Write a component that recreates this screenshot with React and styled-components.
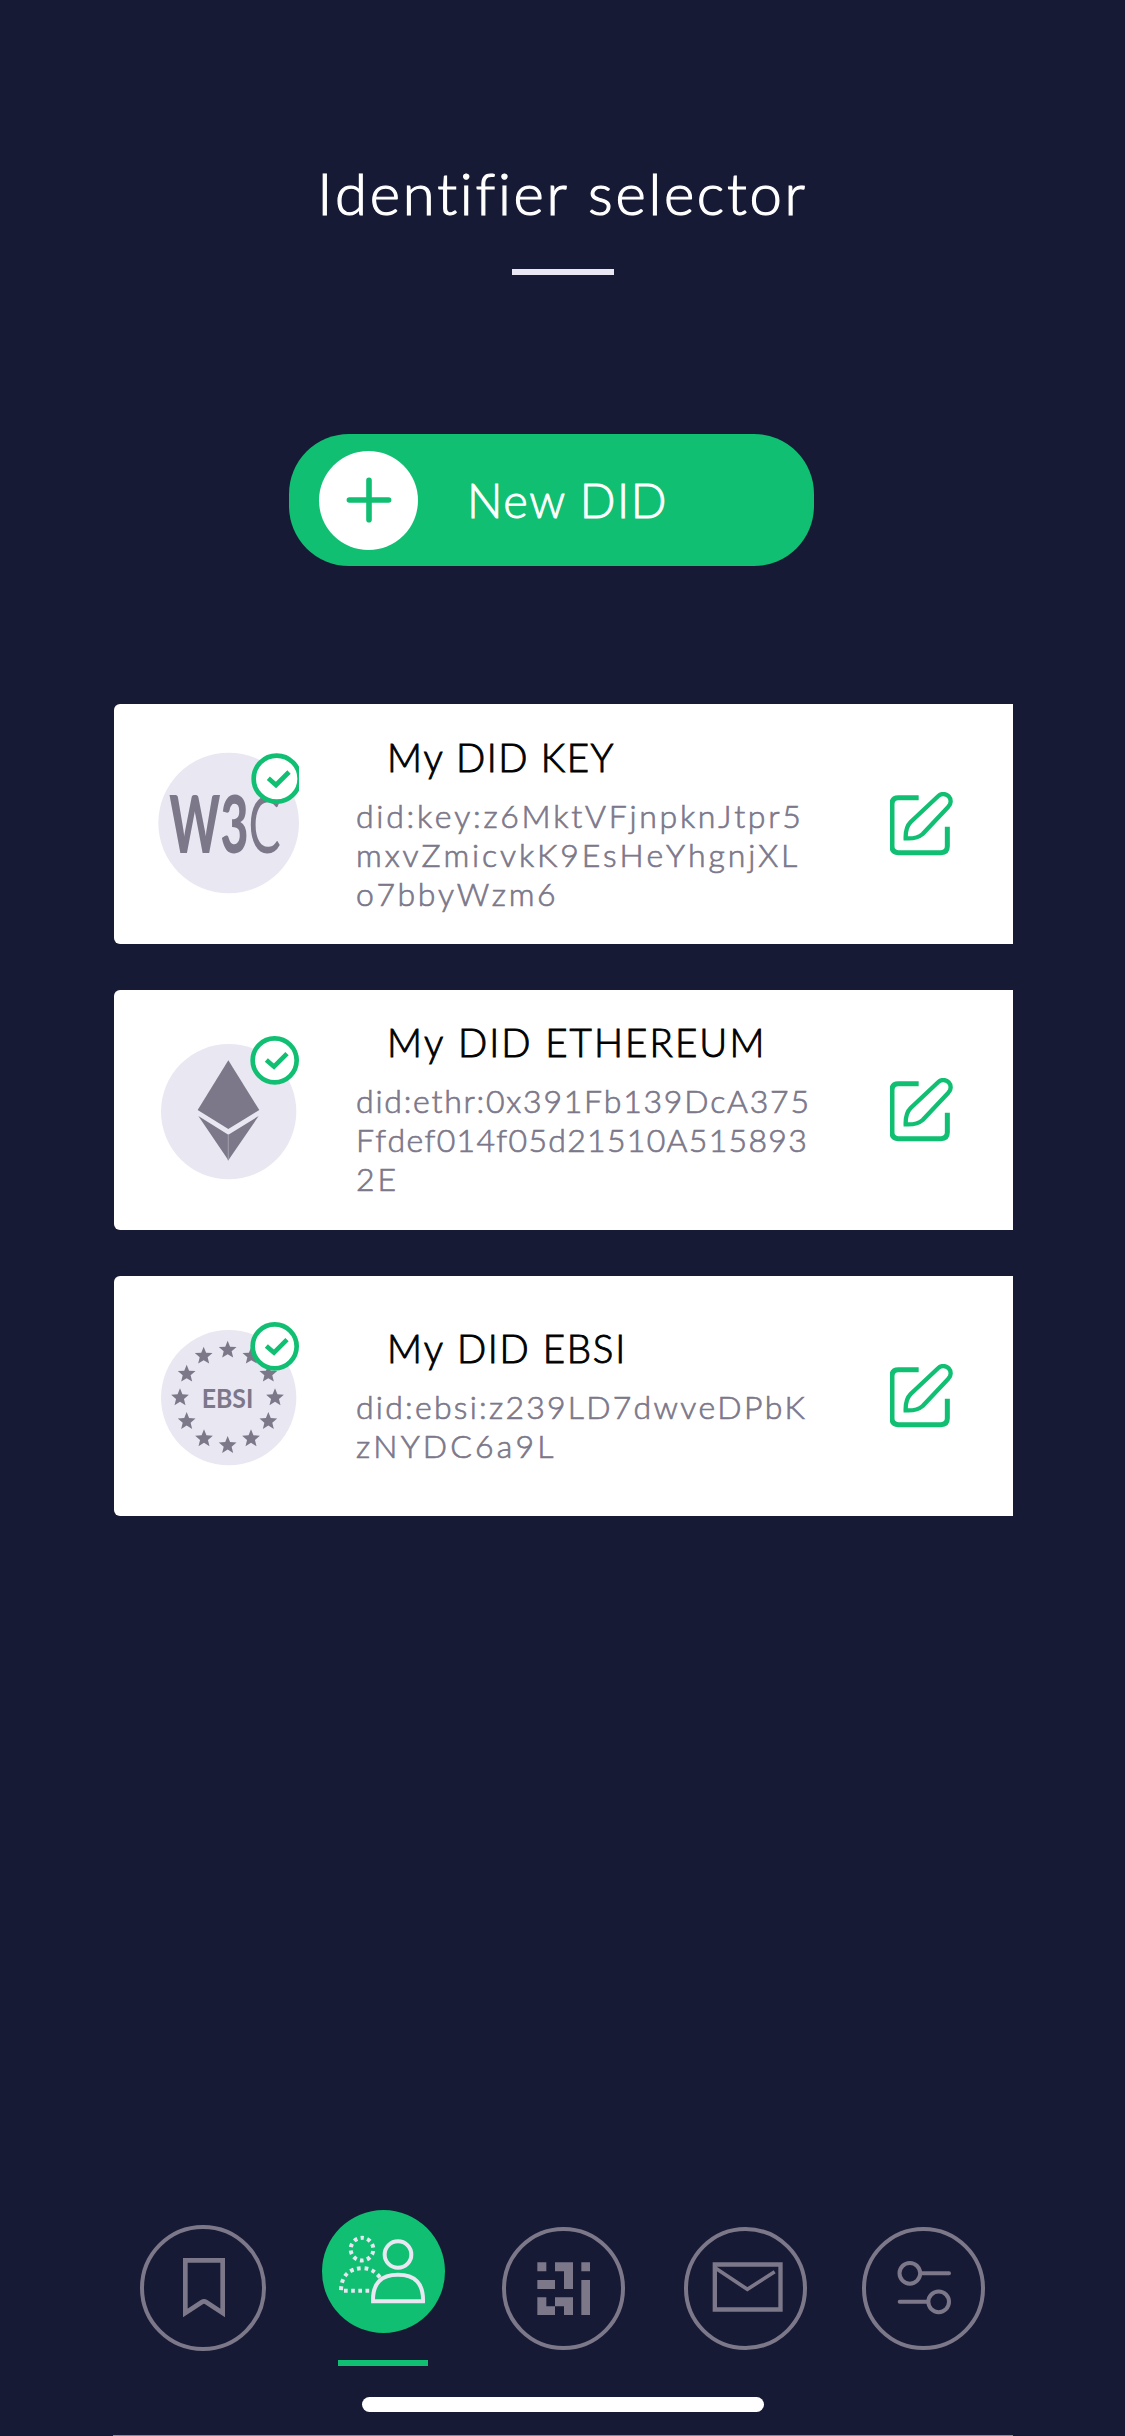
import React from "react";
import styled, { createGlobalStyle } from "styled-components";

const NAVY = "#171a34";
const GREEN = "#10bf72";
const GRAY = "#7c788a";
const LAVENDER = "#e9e8f2";

const GlobalStyle = createGlobalStyle`
  * { box-sizing: border-box; }
  body {
    margin: 0;
    background: ${NAVY};
    font-family: Lato, "Open Sans", sans-serif;
    font-weight: 300;
    font-kerning: none;
    font-variant-ligatures: none;
    -webkit-text-stroke-width: 0.7px;
  }
  svg { display: block; }
`;

const Screen = styled.div`
  width: 1125px;
  height: 2436px;
  display: flex;
  flex-direction: column;
  align-items: center;
  overflow: hidden;
  background: ${NAVY};
`;

const Header = styled.header`
  padding-top: 158px;
  display: flex;
  flex-direction: column;
  align-items: center;
  gap: 41px;
`;

const Title = styled.h1`
  margin: 0;
  color: #fff;
  font-size: 58px;
  font-weight: 300;
  line-height: 70px;
  letter-spacing: 2.7px;
  white-space: nowrap;
  -webkit-text-stroke-width: 1.2px;
`;

const TitleRule = styled.div`
  width: 102px;
  height: 6px;
  margin-left: 2px;
  background: ${LAVENDER};
`;

const NewButton = styled.button`
  width: 525px;
  height: 132px;
  margin: 159px 0 0 -22px;
  padding: 0 0 0 30px;
  display: flex;
  align-items: center;
  gap: 49px;
  border: 0;
  border-radius: 60px;
  background: ${GREEN};
  color: #fff;
  font: 300 47px/56px Lato, "Open Sans", sans-serif;
  letter-spacing: 1.5px;
  -webkit-text-stroke-width: 0.9px;
`;

const PlusDisc = styled.span`
  width: 99px;
  height: 99px;
  display: grid;
  place-items: center;
  border-radius: 50%;
  background: #fff;
`;

const CardList = styled.main`
  flex: 1;
  width: 899px;
  margin: 138px 0 0 2px;
  display: flex;
  flex-direction: column;
  gap: 46px;
`;

const Card = styled.article`
  height: 240px;
  padding: 0 59px 0 44px;
  display: grid;
  grid-template-columns: 141px 1fr 64px;
  align-items: center;
  border-radius: 6px 0 0 6px;
  background: #fff;
`;

const CardText = styled.div`
  padding-left: 57px;
  margin-top: ${(p) => -2 * p.$lift}px;
  display: flex;
  flex-direction: column;
  gap: 16px;
`;

const CardName = styled.h2`
  margin: 0;
  padding-left: 31px;
  color: #000;
  font-size: 38.5px;
  font-weight: 300;
  line-height: 46px;
  letter-spacing: ${(p) => p.$spacing}px;
  white-space: nowrap;
  -webkit-text-stroke-width: 0.9px;
`;

const DidValue = styled.div`
  display: flex;
  flex-direction: column;
`;

const DidLine = styled.span`
  color: ${GRAY};
  font-size: 32px;
  line-height: 39px;
  letter-spacing: ${(p) => p.$spacing}px;
  white-space: nowrap;
`;

const Nav = styled.nav`
  width: 845px;
  height: 141px;
  display: grid;
  grid-template-columns: 182px 180px 182px 178px 123px;
  align-items: start;
`;

const NavItem = styled.div`
  margin-top: ${(p) => p.$top}px;
  display: flex;
  flex-direction: column;
  align-items: flex-start;
  gap: 27px;
`;

const ActiveRule = styled.div`
  width: 90px;
  height: 6px;
  margin-left: 16px;
  background: ${GREEN};
`;

const HomeIndicator = styled.div`
  width: 402px;
  height: 15px;
  margin: 31px 0 23px;
  border-radius: 8px;
  background: #fff;
`;

const BottomRule = styled.div`
  width: 900px;
  height: 1px;
  background: #8b8b93;
`;

const LogoText = styled.text`
  fill: ${GRAY};
  stroke: none;
  font-family: Lato, "Open Sans", sans-serif;
  font-weight: ${(p) => p.$weight};
  font-size: ${(p) => p.$size}px;
`;

const LightSpan = styled.tspan`
  font-weight: 400;
`;

function PlusIcon() {
  return (
    <svg width="46" height="46" viewBox="0 0 46 46" fill="none" stroke={GREEN} strokeWidth="5.6" strokeLinecap="round">
      <path d="M23 3.4V42.8M3.4 23H42.6" />
    </svg>
  );
}

function CheckBadge({ cx, cy, r }) {
  return (
    <g fill="none" stroke={GREEN} strokeWidth="14">
      <circle cx={cx} cy={cy} r={r} fill="#fff" />
      <path d={`M${cx - 25} ${cy - 1}L${cx - 2} ${cy + 19}L${cx + 37} ${cy - 20}`} />
    </g>
  );
}

function W3cAvatar() {
  return (
    <svg width="141" height="148" viewBox="174 180 423 444">
      <circle cx="386" cy="399" r="211" fill={LAVENDER} />
      <LogoText x="208" y="488" $size={238} $weight={900} textLength="334" lengthAdjust="spacingAndGlyphs">
        W3<LightSpan>C</LightSpan>
      </LogoText>
      <CheckBadge cx={530} cy={266} r={69} />
    </svg>
  );
}

function EthereumAvatar() {
  return (
    <svg width="141" height="148" viewBox="174 168 423 444">
      <circle cx="386" cy="395" r="203" fill={LAVENDER} />
      <path d="M385 241L478 390L385 447L293 390Z" fill={GRAY} />
      <path d="M295 408L385 464L476 408L385 541Z" fill={GRAY} />
      <path d="M385 464V541" stroke="#9895a5" strokeWidth="4" />
      <CheckBadge cx={524} cy={241} r={66} />
    </svg>
  );
}

const STAR_CENTERS = [
  [383, 255], [454, 273], [505, 327], [525, 398], [505, 469], [453, 521],
  [383, 541], [312, 521], [260, 469], [240, 398], [260, 327], [311, 273],
];

function starPoints(cx, cy) {
  return Array.from({ length: 10 }, (_, i) => {
    const radius = i % 2 ? 12.5 : 28;
    const angle = (Math.PI / 5) * i - Math.PI / 2;
    return `${(cx + radius * Math.cos(angle)).toFixed(1)},${(cy + radius * Math.sin(angle)).toFixed(1)}`;
  }).join(" ");
}

function EbsiAvatar() {
  return (
    <svg width="141" height="148" viewBox="174 171 423 444">
      <circle cx="386" cy="398" r="203" fill={LAVENDER} />
      {STAR_CENTERS.map(([x, y]) => (
        <polygon key={`${x}-${y}`} points={starPoints(x, y)} fill={GRAY} />
      ))}
      <LogoText x="305" y="428" $size={81} $weight={700} textLength="155" lengthAdjust="spacingAndGlyphs">EBSI</LogoText>
      <CheckBadge cx={524} cy={244} r={66} />
    </svg>
  );
}

function EditIcon() {
  return (
    <svg width="64" height="64" viewBox="990 306 192 192" fill="none" stroke={GREEN} strokeWidth="15">
      <path d="M1076 323H1015Q996 323 996 342V469Q996 488 1015 488H1143Q1162 488 1162 469V410" />
      <path d="M1135 318L1052 396Q1036 412 1037 445Q1071 447 1088 432L1165 350A21.5 21.5 0 0 0 1135 318Z" strokeWidth="13" />
    </svg>
  );
}

function BookmarkIcon() {
  return (
    <svg width="126" height="126" viewBox="120 105 378 378" fill="none" stroke={GRAY} strokeWidth="14">
      <circle cx="309" cy="294" r="183" strokeWidth="12" />
      <path d="M256 211H368V369L318 336Q312 332 306 336L256 369Z" />
    </svg>
  );
}

function IdentitiesIcon() {
  return (
    <svg width="123" height="123" viewBox="666 59.5 369 369" fill="none" stroke={LAVENDER} strokeWidth="12">
      <circle cx="850.5" cy="244" r="184.5" fill={GREEN} stroke="none" />
      <circle cx="894" cy="193" r="40" />
      <path d="M819 333Q817 254 894 254Q971 254 969 333Z" />
      <circle cx="786" cy="177" r="34" strokeDasharray="11 10.36" strokeDashoffset="5.5" transform="rotate(-90 786 177)" />
      <path d="M723 300Q725 234 791 234Q820 236 840 262" strokeDasharray="11 11" />
      <path d="M732 302H818" strokeDasharray="11 10.5" />
    </svg>
  );
}

function ScanIcon() {
  return (
    <svg width="123" height="123" viewBox="96 111 369 369">
      <circle cx="280.5" cy="295.5" r="178.5" fill="none" stroke={GRAY} strokeWidth="12" />
      <path
        fill={GRAY}
        d="M202 217h27v27h-27zM255 217h54v80h-27v-53h-27zM334 217h26v27h-26zM202 270h53v27h-53zM334 270h26v105h-26zM202 322h27v27h26v26h-53zM255 322h54v53h-27v-26h-27z"
      />
    </svg>
  );
}

function MailIcon() {
  return (
    <svg width="123" height="123" viewBox="642 111 369 369" fill="none" stroke={GRAY} strokeWidth="13">
      <circle cx="826.5" cy="295.5" r="178.5" strokeWidth="12" />
      <path d="M734.5 223.5H931.5V358.5H734.5Z" />
      <path d="M736 234L832 298L914 245" strokeWidth="11" />
    </svg>
  );
}

function SettingsIcon() {
  return (
    <svg width="123" height="123" viewBox="96 111 369 369" fill="none" stroke={GRAY} strokeWidth="12" strokeLinecap="round">
      <circle cx="280.5" cy="295.5" r="178.5" />
      <circle cx="239.5" cy="250" r="31" />
      <circle cx="326" cy="335.5" r="31" />
      <path d="M272 250H357M209 335.5H294" />
    </svg>
  );
}

const identifiers = [
  {
    name: "My DID KEY",
    spacing: 1.44,
    lift: 0.5,
    Avatar: W3cAvatar,
    lines: [["did:key:z6MktVFjnpknJtpr5", 2.71], ["mxvZmicvkK9EsHeYhgnjXL", 2.87], ["o7bbyWzm6", 2.6]],
  },
  {
    name: "My DID ETHEREUM",
    spacing: 2.07,
    lift: 1.5,
    Avatar: EthereumAvatar,
    lines: [["did:ethr:0x391Fb139DcA375", 1.75], ["Ffdef014f05d21510A515893", 1.31], ["2E", 3]],
  },
  {
    name: "My DID EBSI",
    spacing: 1.72,
    lift: 1,
    Avatar: EbsiAvatar,
    lines: [["did:ebsi:z239LD7dwveDPbK", 2.24], ["zNYDC6a9L", 3.15]],
  },
];

export default function App() {
  return (
    <Screen>
      <GlobalStyle />
      <Header>
        <Title>Identifier selector</Title>
        <TitleRule />
      </Header>
      <NewButton>
        <PlusDisc><PlusIcon /></PlusDisc>
        New DID
      </NewButton>
      <CardList>
        {identifiers.map(({ name, spacing, lift, Avatar, lines }) => (
          <Card key={name}>
            <Avatar />
            <CardText $lift={lift}>
              <CardName $spacing={spacing}>{name}</CardName>
              <DidValue>
                {lines.map(([text, lineSpacing]) => (
                  <DidLine key={text} $spacing={lineSpacing}>{text}</DidLine>
                ))}
              </DidValue>
            </CardText>
            <EditIcon />
          </Card>
        ))}
      </CardList>
      <Nav>
        <NavItem $top={0}><BookmarkIcon /></NavItem>
        <NavItem $top={-15}><IdentitiesIcon /><ActiveRule /></NavItem>
        <NavItem $top={2}><ScanIcon /></NavItem>
        <NavItem $top={2}><MailIcon /></NavItem>
        <NavItem $top={2}><SettingsIcon /></NavItem>
      </Nav>
      <HomeIndicator />
      <BottomRule />
    </Screen>
  );
}
